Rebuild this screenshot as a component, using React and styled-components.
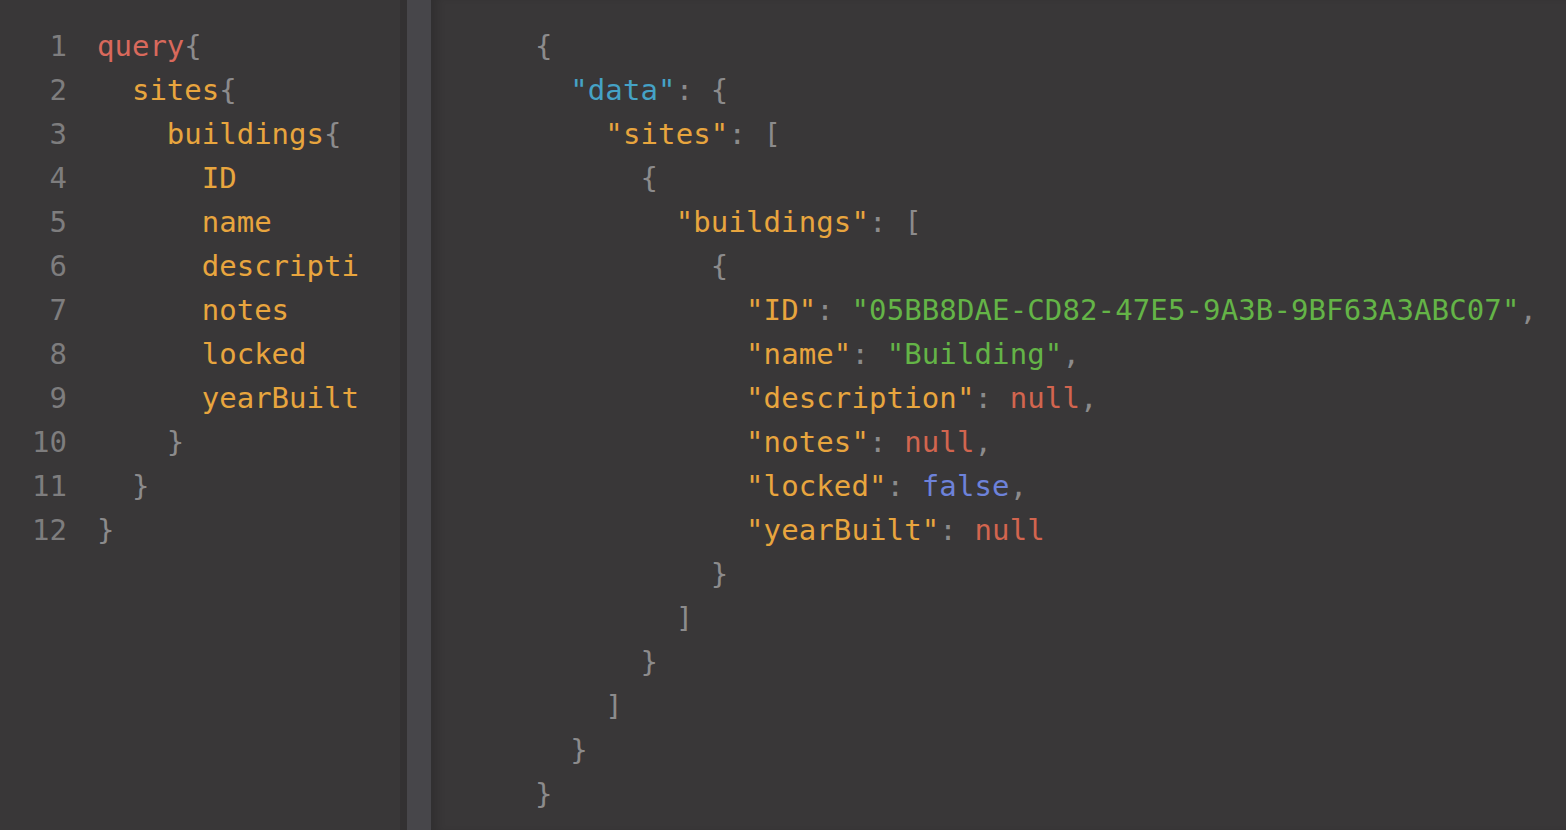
import React from "react";
import styled, { createGlobalStyle } from "styled-components";

const Global = createGlobalStyle`
  html, body { margin: 0; padding: 0; background: #393738; }
  body { font-family: "DejaVu Sans Mono", "Liberation Mono", monospace; }
`;

const COLORS = {
  punct: "#8c8b8c",
  keyword: "#d9695c",
  field: "#e8a53e",
  dataKey: "#45a2c6",
  string: "#64b447",
  nul: "#d2654f",
  bool: "#6d82da",
};

const Page = styled.div`
  display: flex;
  width: 1566px;
  height: 830px;
  background: #393738;
  overflow: hidden;
`;

const QueryPane = styled.section`
  width: 407px;
  flex: none;
  padding-top: 24px;
  box-sizing: border-box;
  box-shadow: inset -7px 0 0 rgba(0, 0, 0, 0.1);
  overflow: hidden;
`;

const DragBar = styled.div`
  width: 24px;
  flex: none;
  background: #47464a;
`;

const ResultPane = styled.section`
  flex: 1;
  padding: 24px 0 0 104px;
  box-sizing: border-box;
  box-shadow: inset 10px 0 8px -4px rgba(0, 0, 0, 0.14);
  overflow: hidden;
`;

const Line = styled.div`
  display: flex;
  align-items: center;
  height: 44px;
  font-size: 29px;
  line-height: 44px;
  letter-spacing: ${(p) => (p.$wide ? "0.12px" : "0")};
  white-space: pre;
`;

const LineNo = styled.span`
  width: 67px;
  flex: none;
  text-align: right;
  color: #7e7d7e;
`;

const Code = styled.span`
  margin-left: 30px;
  width: 263px;
  overflow: hidden;
  white-space: pre;
`;

const Tok = styled.span`
  color: ${(p) => COLORS[p.$k] || COLORS.punct};
`;

const query = [
  [["keyword", "query"], ["punct", "{"]],
  [["punct", "  "], ["field", "sites"], ["punct", "{"]],
  [["punct", "    "], ["field", "buildings"], ["punct", "{"]],
  [["punct", "      "], ["field", "ID"]],
  [["punct", "      "], ["field", "name"]],
  [["punct", "      "], ["field", "description"]],
  [["punct", "      "], ["field", "notes"]],
  [["punct", "      "], ["field", "locked"]],
  [["punct", "      "], ["field", "yearBuilt"]],
  [["punct", "    }"]],
  [["punct", "  }"]],
  [["punct", "}"]],
];

const result = [
  [["punct", "{"]],
  [["punct", "  "], ["dataKey", '"data"'], ["punct", ": {"]],
  [["punct", "    "], ["field", '"sites"'], ["punct", ": ["]],
  [["punct", "      {"]],
  [["punct", "        "], ["field", '"buildings"'], ["punct", ": ["]],
  [["punct", "          {"]],
  [["punct", "            "], ["field", '"ID"'], ["punct", ": "], ["string", '"05BB8DAE-CD82-47E5-9A3B-9BF63A3ABC07"'], ["punct", ","]],
  [["punct", "            "], ["field", '"name"'], ["punct", ": "], ["string", '"Building"'], ["punct", ","]],
  [["punct", "            "], ["field", '"description"'], ["punct", ": "], ["nul", "null"], ["punct", ","]],
  [["punct", "            "], ["field", '"notes"'], ["punct", ": "], ["nul", "null"], ["punct", ","]],
  [["punct", "            "], ["field", '"locked"'], ["punct", ": "], ["bool", "false"], ["punct", ","]],
  [["punct", "            "], ["field", '"yearBuilt"'], ["punct", ": "], ["nul", "null"]],
  [["punct", "          }"]],
  [["punct", "        ]"]],
  [["punct", "      }"]],
  [["punct", "    ]"]],
  [["punct", "  }"]],
  [["punct", "}"]],
];

const renderToks = (toks) =>
  toks.map(([k, t], i) => (
    <Tok key={i} $k={k}>
      {t}
    </Tok>
  ));

export default function App() {
  return (
    <>
      <Global />
      <Page>
        <QueryPane>
          {query.map((toks, i) => (
            <Line key={i}>
              <LineNo>{i + 1}</LineNo>
              <Code>{renderToks(toks)}</Code>
            </Line>
          ))}
        </QueryPane>
        <DragBar />
        <ResultPane>
          {result.map((toks, i) => (
            <Line key={i} $wide>
              {renderToks(toks)}
            </Line>
          ))}
        </ResultPane>
      </Page>
    </>
  );
}
